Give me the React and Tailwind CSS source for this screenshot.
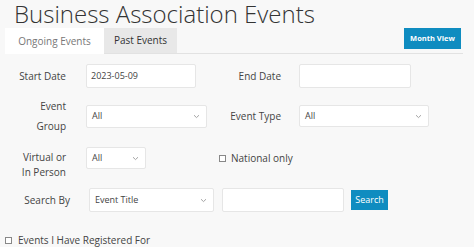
import React from 'react';

function Chevron() {
    return (
        <svg width="7" height="5" viewBox="0 0 7 5" className="shrink-0">
            <path d="M1 1.2 L3.5 3.6 L6 1.2" fill="none" stroke="#9a9a9a" strokeWidth="0.9" />
        </svg>
    );
}

function Select({ value, className }) {
    return (
        <div className={`flex items-center justify-between bg-white border border-[#e6e6e6] rounded-[2px] pl-[5px] pr-[6px] text-[9px] text-[#444] ${className}`}>
            <span>{value}</span>
            <Chevron />
        </div>
    );
}

function Box({ className }) {
    return <span className={`inline-block w-[7px] h-[7px] border border-[#888] bg-white ${className}`} />;
}

export default function App() {
    return (
        <div className="w-[474px] h-[247px] overflow-hidden bg-[#f8f8f8] text-[#444]" style={{ fontFamily: '"Open Sans", sans-serif' }}>
            <h1 className="pl-[14px] text-[24px] leading-[28px] font-light text-[#333] whitespace-nowrap">Business Association Events</h1>

            <div className="ml-[5px] w-[458px] h-[26px] flex items-start border-b border-[#e2e2e2]">
                <div className="w-[99px] h-[26px] bg-white flex items-center justify-center text-[10px] text-[#777]">Ongoing Events</div>
                <div className="w-[73px] h-[25px] bg-[#e8e8e8] flex items-center justify-center text-[10px] text-[#333]">Past Events</div>
                <div className="ml-auto mr-[2px] w-[57px] h-[21px] bg-[#0f8cc0] flex items-center justify-center text-[7.5px] font-bold text-white">Month View</div>
            </div>

            <div className="mt-[10px] flex items-center h-[24px]">
                <div className="w-[66px] text-right text-[10px]">Start Date</div>
                <div className="ml-[20px] w-[110px] h-[24px] bg-white border border-[#e6e6e6] rounded-[2px] flex items-center pl-[4px] text-[9px]">2023-05-09</div>
                <div className="w-[85px] text-right text-[10px]">End Date</div>
                <div className="ml-[18px] w-[112px] h-[24px] bg-white border border-[#e6e6e6] rounded-[2px]" />
            </div>

            <div className="mt-[16px] flex items-center h-[24px]">
                <div className="w-[66px] text-right text-[10px] leading-[20px]">Event<br />Group</div>
                <Select value="All" className="ml-[20px] w-[121px] h-[23px]" />
                <div className="w-[74px] text-right text-[10px]">Event Type</div>
                <Select value="All" className="ml-[18px] w-[130px] h-[22px]" />
            </div>

            <div className="mt-[19px] flex items-start h-[24px]">
                <div className="w-[66px] text-right text-[10px] leading-[15px] mt-[3px]">Virtual or<br />In Person</div>
                <Select value="All" className="ml-[20px] w-[60px] h-[22px]" />
                <div className="ml-[73px] mt-[4px] flex items-center text-[10px]">
                    <Box className="mr-[5px]" />
                    National only
                </div>
            </div>

            <div className="mt-[17px] flex items-center h-[24px]">
                <div className="w-[70px] text-right text-[10px]">Search By</div>
                <Select value="Event Title" className="ml-[19px] w-[125px] h-[24px]" />
                <div className="ml-[8px] w-[122px] h-[24px] bg-white border border-[#e6e6e6] rounded-[2px]" />
                <div className="ml-[7px] w-[37px] h-[20px] bg-[#0f8cc0] flex items-center justify-center text-[9px] text-white">Search</div>
            </div>

            <div className="mt-[21px] ml-[5px] flex items-center text-[10px]">
                <Box className="mr-[6px]" />
                Events I Have Registered For
            </div>
        </div>
    );
}
